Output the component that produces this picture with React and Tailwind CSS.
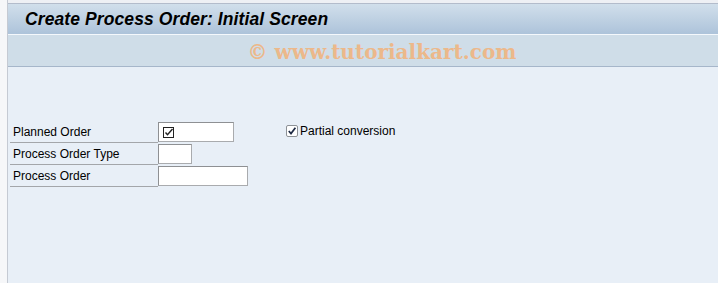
export default function App() {
  const rows = [
    { label: 'Planned Order', w: 'w-[76px]', check: true },
    { label: 'Process Order Type', w: 'w-[34px]' },
    { label: 'Process Order', w: 'w-[90px]' },
  ];

  return (
    <div className="w-[718px] h-[283px] flex bg-[#f6f7f9] overflow-hidden" style={{ fontFamily: '"Liberation Sans", Arial, sans-serif' }}>
      <div className="w-[7px] shrink-0" />
      <div className="flex-1 flex flex-col border-l border-[#c5cad3]">
        <div className="h-[3px] bg-[#eef0f4] border-b border-[#b3bccb] box-content" />
        <div className="h-[31px] flex items-center pl-[17px] bg-gradient-to-b from-[#d1dfeb] to-[#adc3da] border-b border-[#f4f8fc]">
          <span className="text-[17.5px] font-bold italic text-black tracking-[0.1px]">Create Process Order: Initial Screen</span>
        </div>
        <div className="h-[32px] flex items-center justify-center bg-[#cfdde8] border-b border-[#a6b6ca] pl-[38px] pt-[3px]">
          <span className="text-[20px] font-bold text-[#ecb88a]" style={{ fontFamily: '"DejaVu Serif", "Liberation Serif", serif' }}>
            © www.tutorialkart.com
          </span>
        </div>
        <div className="flex-1 bg-[#e8eff7] pt-[54px] pl-[2px] text-[12px] text-black">
          {rows.map((r, i) => (
            <div key={r.label} className="flex items-end h-[22px]">
              <div className="w-[148px] h-[21px] flex items-center pl-[3px] border-b border-[#a3a6aa]">{r.label}</div>
              <div className={`${r.w} h-[20px] bg-white border border-[#a9abae] border-t-[#8e9093] border-l-[#8e9093] mb-[1px] flex items-center pl-[4px]`}>
                {r.check && (
                  <svg width="11" height="11" viewBox="0 0 11 11">
                    <rect x="0.5" y="0.5" width="10" height="10" fill="white" stroke="#222" />
                    <path d="M2.5 5.5 L4.5 7.8 L9.5 2" fill="none" stroke="#222" strokeWidth="1.4" />
                  </svg>
                )}
              </div>
              {i === 0 && (
                <div className="flex items-center ml-[52px] mb-[3px] gap-[2px]">
                  <div className="w-[12px] h-[12px] bg-white border border-[#8d9196] rounded-[2px] flex items-center justify-center">
                    <svg width="10" height="10" viewBox="0 0 10 10">
                      <path d="M1.8 5 L4 7.6 L8.4 1.8" fill="none" stroke="#1e2a44" strokeWidth="1.7" />
                    </svg>
                  </div>
                  <span>Partial conversion</span>
                </div>
              )}
            </div>
          ))}
        </div>
      </div>
    </div>
  );
}
